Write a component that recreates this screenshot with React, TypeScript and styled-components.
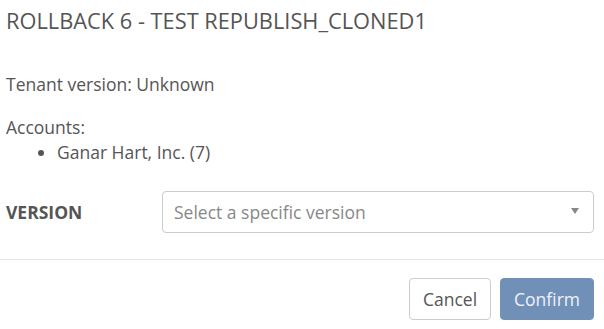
import React from "react";
import styled, { createGlobalStyle } from "styled-components";

const Global = createGlobalStyle`
  html, body { margin: 0; padding: 0; background: #fff; }
  body { font-family: "Open Sans", "Liberation Sans", sans-serif; color: #555; }
  * { box-sizing: border-box; }
`;

const Modal = styled.div`
  width: 604px;
  height: 329px;
  display: flex;
  flex-direction: column;
  overflow: hidden;
`;

const Header = styled.div`
  padding: 10px 10px 0 6px;
`;

const Title = styled.h4`
  margin: 0;
  font-size: 21.8px;
  font-weight: 400;
  line-height: 22px;
  color: #555;
`;

const Body = styled.div`
  padding: 39.5px 10px 0 6px;
  font-size: 17.5px;
  line-height: 25px;
`;

const Para = styled.p<{ $gap?: number }>`
  margin: 0 0 ${(p) => p.$gap ?? 0}px 0;
`;

const List = styled.ul`
  margin: 0;
  padding-left: 51px;
  list-style: disc;
`;

const Row = styled.div`
  display: flex;
  align-items: center;
  margin-top: 26.5px;
`;

const Label = styled.label`
  width: 156px;
  font-weight: 700;
  font-size: 17.5px;
  color: #555;
`;

const SelectBox = styled.div`
  flex: 1;
  height: 42px;
  border: 1px solid #ccc;
  border-radius: 4px;
  display: flex;
  align-items: center;
  justify-content: space-between;
  padding: 0 14px 0 11px;
  color: #888;
  font-size: 17.5px;
`;

const Caret = styled.span`
  width: 0;
  height: 0;
  border-left: 4px solid transparent;
  border-right: 4px solid transparent;
  border-top: 6px solid #888;
  margin-top: -2px;
`;

const Divider = styled.hr`
  margin: 26px 0 0 0;
  border: 0;
  border-top: 1px solid #e5e5e5;
`;

const Footer = styled.div`
  display: flex;
  justify-content: flex-end;
  gap: 9px;
  padding: 18px 10px 0 6px;
`;

const Button = styled.button<{ $primary?: boolean }>`
  height: 42px;
  padding: 0 13px;
  font-family: inherit;
  font-size: 17.5px;
  border-radius: 4px;
  border: 1px solid ${(p) => (p.$primary ? "#7090b8" : "#ccc")};
  background: ${(p) => (p.$primary ? "#7090b8" : "#fff")};
  color: ${(p) => (p.$primary ? "#eef2f8" : "#555")};
`;

export default function App() {
  return (
    <>
      <Global />
      <Modal>
        <Header>
          <Title>ROLLBACK 6 - TEST REPUBLISH_CLONED1</Title>
        </Header>
        <Body>
          <Para $gap={18}>Tenant version: Unknown</Para>
          <Para>Accounts:</Para>
          <List>
            <li>Ganar Hart, Inc. (7)</li>
          </List>
          <Row>
            <Label>VERSION</Label>
            <SelectBox>
              <span>Select a specific version</span>
              <Caret />
            </SelectBox>
          </Row>
        </Body>
        <Divider />
        <Footer>
          <Button>Cancel</Button>
          <Button $primary>Confirm</Button>
        </Footer>
      </Modal>
    </>
  );
}
